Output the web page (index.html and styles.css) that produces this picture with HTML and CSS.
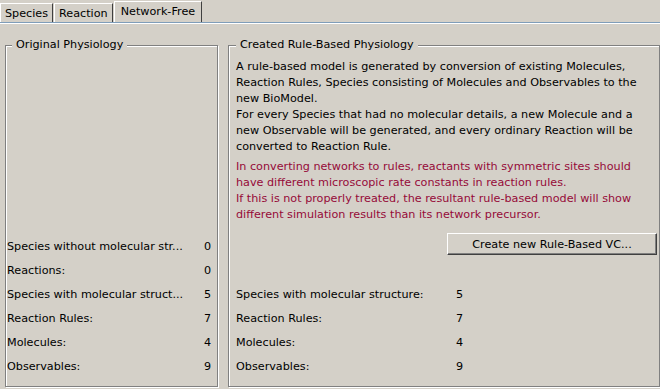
FILE: index.html
```html
<!DOCTYPE html>
<html lang="en">
<head>
  <meta charset="UTF-8">
  <title>Network-Free</title>
  <link rel="stylesheet" href="styles.css">
</head>
<body>

<div class="tabs">
  <div class="tab">Species</div>
  <div class="tab">Reaction</div>
  <div class="tab selected">Network-Free</div>
</div>

<div class="panel">
  <fieldset class="group original">
    <legend>Original Physiology</legend>
    <div class="stats">
      <div class="row"><span class="label">Species without molecular str...</span><span class="value">0</span></div>
      <div class="row"><span class="label">Reactions:</span><span class="value">0</span></div>
      <div class="row"><span class="label">Species with molecular struct...</span><span class="value">5</span></div>
      <div class="row"><span class="label">Reaction Rules:</span><span class="value">7</span></div>
      <div class="row"><span class="label">Molecules:</span><span class="value">4</span></div>
      <div class="row"><span class="label">Observables:</span><span class="value">9</span></div>
    </div>
  </fieldset>

  <fieldset class="group created">
    <legend>Created Rule-Based Physiology</legend>
    <p class="info">
      A rule-based model is generated by conversion of existing Molecules,<br>
      Reaction Rules, Species consisting of Molecules and Observables to the<br>
      new BioModel.<br>
      For every Species that had no molecular details, a new Molecule and a<br>
      new Observable will be generated, and every ordinary Reaction will be<br>
      converted to Reaction Rule.
    </p>
    <p class="warning">
      In converting networks to rules, reactants with symmetric sites should<br>
      have different microscopic rate constants in reaction rules.<br>
      If this is not properly treated, the resultant rule-based model will show<br>
      different simulation results than its network precursor.
    </p>
    <div class="actions">
      <button class="create-btn">Create new Rule-Based VC...</button>
    </div>
    <div class="stats">
      <div class="row"><span class="label">Species with molecular structure:</span><span class="value">5</span></div>
      <div class="row"><span class="label">Reaction Rules:</span><span class="value">7</span></div>
      <div class="row"><span class="label">Molecules:</span><span class="value">4</span></div>
      <div class="row"><span class="label">Observables:</span><span class="value">9</span></div>
    </div>
  </fieldset>
</div>

</body>
</html>
```

FILE: styles.css
```css
/* General */
body {
  margin: 0;
  width: 660px;
  height: 389px;
  overflow: hidden;
  background-color: #d4d0c8;
  font-family: "DejaVu Sans", Tahoma, sans-serif;
  font-size: 11.2px;
  color: #000;
}

/* Tabs */
.tabs {
  display: flex;
  height: 22px;
  align-items: flex-end;
  border-bottom: 1px solid #7f9db9;
  box-shadow: 0 1px 0 #fff;
}
.tab {
  height: 19px;
  line-height: 19px;
  padding: 0 4px;
  margin-right: 1px;
  border-top: 1px solid #fff;
  border-left: 1px solid #fff;
  border-right: 1px solid #404040;
  box-sizing: border-box;
}
.tab.selected {
  height: 21px;
  line-height: 19px;
  padding: 0 6px;
}

/* Panel with two group boxes */
.panel {
  display: flex;
  gap: 10px;
  padding: 15px 0 0 5px;
}
.group {
  margin: 0;
  padding: 0 2px 7px 1px;
  border: 1px solid #808080;
  box-shadow: inset 1px 1px 0 #fff, 1px 1px 0 #fff;
  height: 349px;
  box-sizing: border-box;
  display: flex;
  flex-direction: column;
}
.group legend {
  padding: 0 4px;
  margin-left: 5px;
  line-height: 14px;
  background-color: #d4d0c8;
}
.original {
  width: 214px;
  padding-right: 6px;
  justify-content: flex-end;
}
.created {
  width: 434px;
  padding-left: 7px;
}
.created legend {
  margin-left: 0;
}

/* Texts */
.info, .warning {
  margin: 0;
  line-height: 16px;
}
.info {
  margin-top: 7px;
}
.warning {
  margin-top: 4px;
  color: #960a38;
}

/* Button */
.actions {
  display: flex;
  justify-content: flex-end;
  margin-top: 10px;
}
.create-btn {
  width: 210px;
  height: 22px;
  font-family: inherit;
  font-size: 11.2px;
  color: #000;
  background-color: #d4d0c8;
  border: 1px solid;
  border-color: #fff #404040 #404040 #fff;
  box-shadow: inset -1px -1px 0 #808080;
}

/* Stats rows */
.stats {
  margin-top: auto;
}
.row {
  display: flex;
  height: 24px;
  line-height: 24px;
}
.original .label {
  flex: 1;
  white-space: nowrap;
}
.original .value {
  width: 10px;
  text-align: right;
}
.created .label {
  width: 220px;
}
```
